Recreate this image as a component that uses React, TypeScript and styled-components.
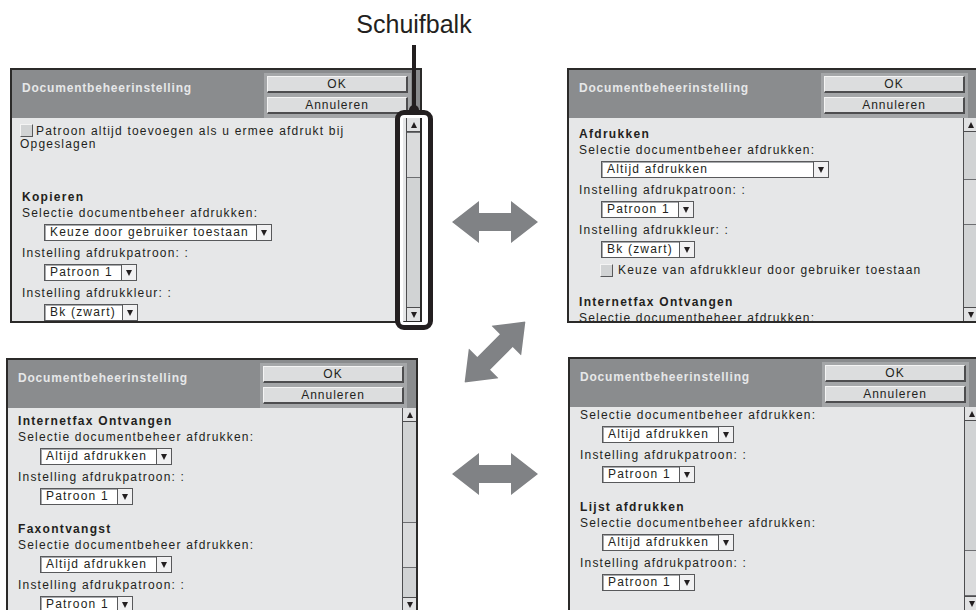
import React from 'react';
import styled, { createGlobalStyle } from 'styled-components';

const GlobalStyle = createGlobalStyle`
  html, body { margin: 0; padding: 0; background: #ffffff; }
  body { font-family: "Liberation Sans", Arial, sans-serif; }
`;

const INK = '#231f20';
const LINE = '#58595b';

const Page = styled.div`
  position: relative;
  width: 976px;
  height: 610px;
  overflow: hidden;
  background: #ffffff;
  box-sizing: border-box;
  padding: 68px 0 0 6px;
`;

const Board = styled.div`
  display: grid;
  grid-template-columns: 416px 145px 412px;
  grid-template-rows: 255px 255px;
  grid-template-areas:
    'p1 mid p2'
    'p3 mid p4';
  row-gap: 34px;
`;

const Panel = styled.section<{ $area: string; $dx: number; $dy: number }>`
  grid-area: ${(p) => p.$area};
  width: 412px;
  height: 255px;
  box-sizing: border-box;
  margin-left: ${(p) => p.$dx}px;
  margin-top: ${(p) => p.$dy}px;
  border: 2px solid #2b2a29;
  background: #e6e7e8;
  display: flex;
  flex-direction: column;
  color: ${INK};
  font-family: "Liberation Sans", Arial, sans-serif;
`;

const Header = styled.header`
  height: 48px;
  flex: none;
  box-sizing: border-box;
  background: #8a8c8e;
  display: flex;
  justify-content: space-between;
  align-items: flex-start;
  padding: 0 9px 0 10px;
`;

const Title = styled.h1`
  margin: 0;
  padding-top: 11px;
  font-size: 12px;
  line-height: 15px;
  font-weight: bold;
  letter-spacing: 0.8px;
  color: #e6e7e8;
`;

const ButtonStack = styled.div`
  margin-top: 3px;
  padding: 3px 3px 4px;
  background: #a4a6a8;
  display: flex;
  flex-direction: column;
  gap: 4px;
`;

const HeadButton = styled.button`
  width: 141px;
  height: 17px;
  box-sizing: border-box;
  margin: 0;
  padding: 0;
  background: #dcddde;
  border-top: 1px solid #f4f4f4;
  border-left: 1px solid #f4f4f4;
  border-right: 2px solid #4d4d4f;
  border-bottom: 2px solid #4d4d4f;
  font-family: "Liberation Sans", Arial, sans-serif;
  font-size: 12px;
  line-height: 14px;
  letter-spacing: 1px;
  color: ${INK};
`;

const Body = styled.div`
  flex: 1;
  min-height: 0;
  display: flex;
`;

const Content = styled.div`
  flex: 1;
  min-width: 0;
  overflow: hidden;
  padding-left: 10px;
`;

const Scroller = styled.div<{ $offset: number }>`
  margin-top: ${(p) => p.$offset}px;
`;

const Note = styled.p`
  margin: 0 0 38px -2px;
  font-size: 12px;
  line-height: 13px;
  letter-spacing: 1.2px;
  white-space: nowrap;
`;

const Section = styled.div`
  & + & {
    margin-top: 16px;
  }
`;

const Heading = styled.div`
  font-size: 12px;
  line-height: 17px;
  font-weight: bold;
  letter-spacing: 1.3px;
  white-space: nowrap;
`;

const Label = styled.div`
  font-size: 12px;
  line-height: 15px;
  letter-spacing: 1.2px;
  white-space: nowrap;
`;

const Select = styled.div<{ $w: number }>`
  width: ${(p) => p.$w}px;
  height: 17px;
  box-sizing: border-box;
  margin: 3px 0 5px 22px;
  display: flex;
  background: #ffffff;
  border: 1px solid ${LINE};
  box-shadow: inset 1px 1px 0 #a7a9ac;
`;

const SelectText = styled.span`
  flex: 1;
  padding-left: 5px;
  font-size: 12px;
  line-height: 15px;
  letter-spacing: 1.2px;
  white-space: nowrap;
  overflow: hidden;
`;

const SelectArrow = styled.span`
  width: 14px;
  flex: none;
  border-left: 1px solid ${LINE};
  background: #f1f1f2;
  display: flex;
  align-items: center;
  justify-content: center;
  &::after {
    content: '';
    border-left: 3.5px solid transparent;
    border-right: 3.5px solid transparent;
    border-top: 6px solid ${INK};
  }
`;

const CheckRow = styled.div`
  margin-left: 21px;
  display: flex;
  align-items: center;
  gap: 2px;
  font-size: 12px;
  line-height: 15px;
  letter-spacing: 1.2px;
  white-space: nowrap;
`;

const CheckBox = styled.span`
  display: inline-block;
  width: 13px;
  height: 13px;
  box-sizing: border-box;
  vertical-align: -2px;
  margin-right: 3px;
  background: #d1d3d4;
  border-top: 1px solid #f4f4f4;
  border-left: 1px solid #f4f4f4;
  border-right: 1px solid ${LINE};
  border-bottom: 1px solid ${LINE};
`;

const ScrollBar = styled.div`
  width: 14px;
  flex: none;
  box-sizing: border-box;
  border-left: 1px solid #4d4d4f;
  background: #d1d3d4;
  display: flex;
  flex-direction: column;
`;

const ScrollButton = styled.div<{ $dir: 'up' | 'down' }>`
  height: 14px;
  flex: none;
  box-sizing: border-box;
  background: #e1e2e3;
  display: flex;
  align-items: center;
  justify-content: center;
  border-${(p) => (p.$dir === 'up' ? 'bottom' : 'top')}: 1px solid #4d4d4f;
  &::after {
    content: '';
    border-left: 3.5px solid transparent;
    border-right: 3.5px solid transparent;
    border-${(p) => (p.$dir === 'up' ? 'bottom' : 'top')}: 6px solid ${INK};
  }
`;

const ScrollTrack = styled.div`
  flex: 1;
  min-height: 0;
`;

const ScrollThumb = styled.div<{ $top: number }>`
  margin-top: ${(p) => p.$top}px;
  height: 46px;
  box-sizing: border-box;
  background: #dadbdc;
  border-top: 1px solid #6d6e71;
  border-bottom: 1px solid #6d6e71;
`;

const ArrowColumn = styled.div`
  grid-area: mid;
  display: flex;
  flex-direction: column;
  align-items: center;
`;

const ArrowSlot = styled.div<{ $gap: number }>`
  margin-top: ${(p) => p.$gap}px;
  width: 86px;
  height: 42px;
  flex: none;
`;

const ArrowSvg = styled.svg<{ $angle: number }>`
  display: block;
  transform: rotate(${(p) => p.$angle}deg);
`;

const Callout = styled.div`
  position: absolute;
  left: 354px;
  top: 10px;
  width: 120px;
  display: flex;
  flex-direction: column;
  align-items: center;
  pointer-events: none;
`;

const CalloutLabel = styled.div`
  font-family: "Liberation Sans", Arial, sans-serif;
  font-size: 25px;
  line-height: 28px;
  color: ${INK};
  white-space: nowrap;
`;

const Stem = styled.div`
  width: 4px;
  height: 65px;
  margin-top: 7px;
  background: ${INK};
`;

const Dot = styled.div`
  width: 10px;
  height: 10px;
  border-radius: 50%;
  margin-top: -5px;
  background: ${INK};
  position: relative;
  z-index: 1;
`;

const Frame = styled.div`
  width: 38px;
  height: 220px;
  margin-top: -5px;
  box-sizing: border-box;
  border: 5px solid ${INK};
  border-radius: 9px;
  box-shadow: inset 0 0 0 3px #ffffff;
`;

type Item =
  | { kind: 'heading'; text: string }
  | { kind: 'label'; text: string }
  | { kind: 'select'; text: string; width: number }
  | { kind: 'check'; text: string };

type PanelData = {
  area: string;
  dx: number;
  dy: number;
  offset: number;
  thumb: number;
  note?: boolean;
  sections: Item[][];
};

const SEL = 'Selectie documentbeheer afdrukken:';
const PAT = 'Instelling afdrukpatroon: :';
const KLR = 'Instelling afdrukkleur: :';

const panels: PanelData[] = [
  {
    area: 'p1',
    dx: 4,
    dy: 0,
    offset: 6,
    thumb: 0,
    note: true,
    sections: [
      [
        { kind: 'heading', text: 'Kopieren' },
        { kind: 'label', text: SEL },
        { kind: 'select', text: 'Keuze door gebruiker toestaan', width: 228 },
        { kind: 'label', text: PAT },
        { kind: 'select', text: 'Patroon 1', width: 93 },
        { kind: 'label', text: KLR },
        { kind: 'select', text: 'Bk (zwart)', width: 94 },
      ],
    ],
  },
  {
    area: 'p2',
    dx: 0,
    dy: 0,
    offset: 8,
    thumb: 47,
    sections: [
      [
        { kind: 'heading', text: 'Afdrukken' },
        { kind: 'label', text: SEL },
        { kind: 'select', text: 'Altijd afdrukken', width: 228 },
        { kind: 'label', text: PAT },
        { kind: 'select', text: 'Patroon 1', width: 93 },
        { kind: 'label', text: KLR },
        { kind: 'select', text: 'Bk (zwart)', width: 94 },
        { kind: 'check', text: 'Keuze van afdrukkleur door gebruiker toestaan' },
      ],
      [
        { kind: 'heading', text: 'Internetfax Ontvangen' },
        { kind: 'label', text: SEL },
      ],
    ],
  },
  {
    area: 'p3',
    dx: 0,
    dy: 1,
    offset: 5,
    thumb: 100,
    sections: [
      [
        { kind: 'heading', text: 'Internetfax Ontvangen' },
        { kind: 'label', text: SEL },
        { kind: 'select', text: 'Altijd afdrukken', width: 132 },
        { kind: 'label', text: PAT },
        { kind: 'select', text: 'Patroon 1', width: 93 },
      ],
      [
        { kind: 'heading', text: 'Faxontvangst' },
        { kind: 'label', text: SEL },
        { kind: 'select', text: 'Altijd afdrukken', width: 132 },
        { kind: 'label', text: PAT },
        { kind: 'select', text: 'Patroon 1', width: 93 },
      ],
    ],
  },
  {
    area: 'p4',
    dx: 1,
    dy: 0,
    offset: 1,
    thumb: 129,
    sections: [
      [
        { kind: 'label', text: SEL },
        { kind: 'select', text: 'Altijd afdrukken', width: 132 },
        { kind: 'label', text: PAT },
        { kind: 'select', text: 'Patroon 1', width: 93 },
      ],
      [
        { kind: 'heading', text: 'Lijst afdrukken' },
        { kind: 'label', text: SEL },
        { kind: 'select', text: 'Altijd afdrukken', width: 132 },
        { kind: 'label', text: PAT },
        { kind: 'select', text: 'Patroon 1', width: 93 },
      ],
    ],
  },
];

function renderItem(item: Item, i: number) {
  switch (item.kind) {
    case 'heading':
      return <Heading key={i}>{item.text}</Heading>;
    case 'label':
      return <Label key={i}>{item.text}</Label>;
    case 'select':
      return (
        <Select key={i} $w={item.width}>
          <SelectText>{item.text}</SelectText>
          <SelectArrow />
        </Select>
      );
    case 'check':
      return (
        <CheckRow key={i}>
          <CheckBox />
          {item.text}
        </CheckRow>
      );
  }
}

function SettingsPanel({ data }: { data: PanelData }) {
  return (
    <Panel $area={data.area} $dx={data.dx} $dy={data.dy}>
      <Header>
        <Title>Documentbeheerinstelling</Title>
        <ButtonStack>
          <HeadButton>OK</HeadButton>
          <HeadButton>Annuleren</HeadButton>
        </ButtonStack>
      </Header>
      <Body>
        <Content>
          <Scroller $offset={data.offset}>
            {data.note && (
              <Note>
                <CheckBox />
                Patroon altijd toevoegen als u ermee afdrukt bij
                <br />
                Opgeslagen
              </Note>
            )}
            {data.sections.map((items, s) => (
              <Section key={s}>{items.map(renderItem)}</Section>
            ))}
          </Scroller>
        </Content>
        <ScrollBar>
          <ScrollButton $dir="up" />
          <ScrollTrack>
            <ScrollThumb $top={data.thumb} />
          </ScrollTrack>
          <ScrollButton $dir="down" />
        </ScrollBar>
      </Body>
    </Panel>
  );
}

function DoubleArrow({ angle = 0 }: { angle?: number }) {
  return (
    <ArrowSvg $angle={angle} width="86" height="42" viewBox="0 0 86 42">
      <polygon
        points="0,21 27,0 27,12 59,12 59,0 86,21 59,42 59,30 27,30 27,42"
        fill="#808285"
      />
    </ArrowSvg>
  );
}

export default function App() {
  return (
    <>
      <GlobalStyle />
      <Page>
        <Board>
          {panels.map((p) => (
            <SettingsPanel key={p.area} data={p} />
          ))}
          <ArrowColumn>
            <ArrowSlot $gap={133}>
              <DoubleArrow />
            </ArrowSlot>
            <ArrowSlot $gap={88}>
              <DoubleArrow angle={-45} />
            </ArrowSlot>
            <ArrowSlot $gap={80}>
              <DoubleArrow />
            </ArrowSlot>
          </ArrowColumn>
        </Board>
        <Callout>
          <CalloutLabel>Schuifbalk</CalloutLabel>
          <Stem />
          <Dot />
          <Frame />
        </Callout>
      </Page>
    </>
  );
}
